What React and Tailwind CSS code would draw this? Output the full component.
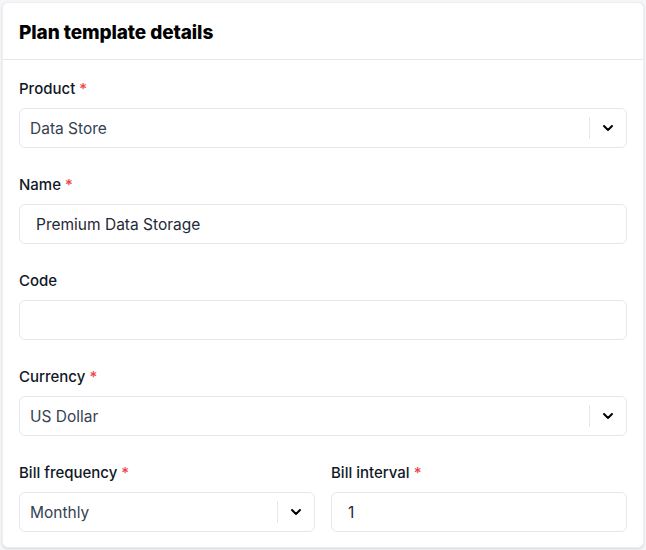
import React from 'react';
import { ChevronDown } from 'lucide-react';

const Label = ({ children, required }) => (
  <label className="block text-[15px] leading-5 font-medium text-[#111827] mb-[9px]">
    {children}
    {required && <span className="text-[#ef4444] ml-1">*</span>}
  </label>
);

const Select = ({ value }) => (
  <div className="flex items-center h-10 rounded-md border border-[#e2e8f0] bg-white">
    <div className="flex-1 pl-[10px] pt-px text-[15.5px] text-[#374151] truncate">{value}</div>
    <div className="w-px h-[22px] bg-[#e2e8f0]" />
    <div className="w-9 flex items-center justify-center text-black">
      <ChevronDown size={16} strokeWidth={3} />
    </div>
  </div>
);

const Input = ({ value }) => (
  <div className="flex items-center h-10 rounded-md border border-[#e2e8f0] bg-white pl-[16px] pt-px text-[15.5px] text-[#1f2937]">
    {value}
  </div>
);

const App = () => {
  return (
    <div className="min-h-[550px] bg-[#f5f6f8] p-[2px]" style={{ fontFamily: 'Inter, "Noto Sans", sans-serif' }}>
      <div className="bg-white rounded-md border border-[#eceef1] shadow-sm h-[546px]">
        <div className="px-4 pt-4 pb-3 border-b border-[#e5e7eb]">
          <h2 className="text-[19px] leading-7 font-extrabold text-black tracking-[-0.1px]">Plan template details</h2>
        </div>
        <div className="px-4 pt-[19px] pb-4 flex flex-col gap-[27px]">
          <div>
            <Label required>Product</Label>
            <Select value="Data Store" />
          </div>
          <div>
            <Label required>Name</Label>
            <Input value="Premium Data Storage" />
          </div>
          <div>
            <Label>Code</Label>
            <Input value="" />
          </div>
          <div>
            <Label required>Currency</Label>
            <Select value="US Dollar" />
          </div>
          <div className="grid grid-cols-2 gap-4">
            <div>
              <Label required>Bill frequency</Label>
              <Select value="Monthly" />
            </div>
            <div>
              <Label required>Bill interval</Label>
              <Input value="1" />
            </div>
          </div>
        </div>
      </div>
    </div>
  );
};

export default App;
